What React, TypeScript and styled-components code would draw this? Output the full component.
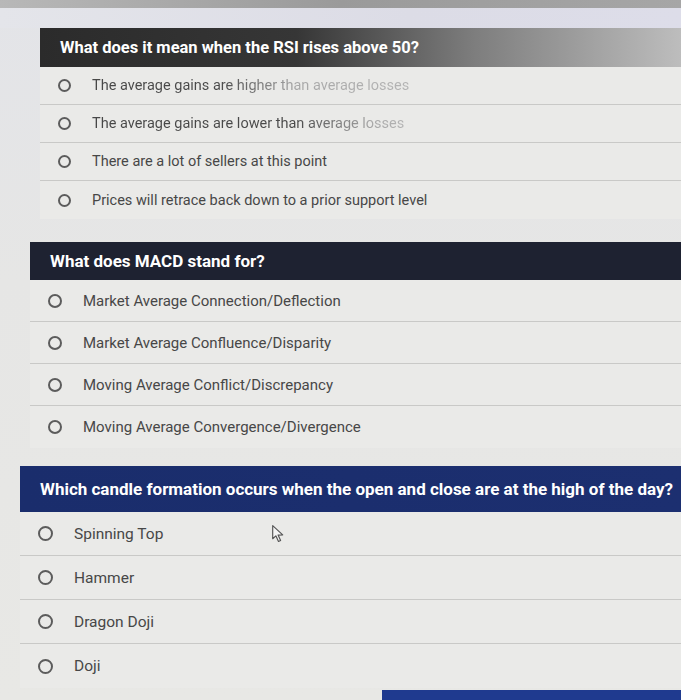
import styled, { createGlobalStyle } from "styled-components";

const GlobalStyle = createGlobalStyle`
  body {
    margin: 0;
    padding: 0;
    background: #e5e5e4;
    font-family: Roboto, "Liberation Sans", sans-serif;
  }
`;

const Page = styled.div`
  width: 681px;
  height: 700px;
  overflow: hidden;
  display: flex;
  flex-direction: column;
  background: linear-gradient(180deg, #e3e4e8 0%, #e6e6e5 40%, #e8e8e5 100%);
`;

const Bezel = styled.div`
  height: 8px;
  background: linear-gradient(90deg, #b8b8b8 0%, #9a9a9a 50%, #a6a6a6 100%);
`;

const Glare = styled.div`
  height: 20px;
  background: linear-gradient(90deg, #e4e5ea 0%, #dcdce6 60%, #dddde9 100%);
`;

const Section = styled.section<{ $indent: number; $gap: number }>`
  display: flex;
  flex-direction: column;
  margin-left: ${(p) => p.$indent}px;
  margin-bottom: ${(p) => p.$gap}px;
`;

const Header = styled.div<{ $bg: string; $height: number; $size: number }>`
  height: ${(p) => p.$height}px;
  display: flex;
  align-items: center;
  padding-left: 20px;
  background: ${(p) => p.$bg};
  color: #ffffff;
  font-weight: 700;
  font-size: ${(p) => p.$size}px;
  white-space: nowrap;
`;

const Options = styled.div`
  display: flex;
  flex-direction: column;
  background: #eaeae8;
`;

const Row = styled.label<{ $height: number; $last?: boolean }>`
  height: ${(p) => p.$height}px;
  display: flex;
  align-items: center;
  border-bottom: ${(p) => (p.$last ? "none" : "1px solid #c9c9c7")};
  box-sizing: border-box;
`;

const Radio = styled.span<{ $size: number }>`
  width: ${(p) => p.$size}px;
  height: ${(p) => p.$size}px;
  border: 2px solid #5c5c5c;
  border-radius: 50%;
  box-sizing: border-box;
  margin-left: 18px;
  margin-right: 21px;
  flex-shrink: 0;
`;

const Label = styled.span<{ $size: number; $fade?: number }>`
  font-size: ${(p) => p.$size}px;
  color: #474747;
  white-space: nowrap;
  ${(p) =>
    p.$fade
      ? `
    background: linear-gradient(90deg, #474747 0%, #4a4a4a ${p.$fade}%, #a8a8a8 ${p.$fade + 25}%, #b4b4b4 100%);
    -webkit-background-clip: text;
    background-clip: text;
    color: transparent;
  `
      : ""}
`;

const Cursor = styled.svg`
  margin-left: 108px;
`;

const NextBar = styled.div`
  margin-top: auto;
  margin-left: 382px;
  height: 10px;
  background: #1f3a8f;
`;

type Option = { text: string; fade?: number; cursor?: boolean };

type Question = {
  title: string;
  indent: number;
  gap: number;
  headerBg: string;
  headerHeight: number;
  titleSize: number;
  rowHeight: number;
  textSize: number;
  radioSize: number;
  options: Option[];
};

const questions: Question[] = [
  {
    title: "What does it mean when the RSI rises above 50?",
    indent: 40,
    gap: 23,
    headerBg:
      "linear-gradient(90deg, #2b2b2b 0%, #363636 40%, #7e7e7e 68%, #bdbdbd 100%)",
    headerHeight: 39,
    titleSize: 16.5,
    rowHeight: 38,
    textSize: 14.5,
    radioSize: 13,
    options: [
      { text: "The average gains are higher than average losses", fade: 40 },
      { text: "The average gains are lower than average losses", fade: 65 },
      { text: "There are a lot of sellers at this point" },
      { text: "Prices will retrace back down to a prior support level" },
    ],
  },
  {
    title: "What does MACD stand for?",
    indent: 30,
    gap: 18,
    headerBg: "#1e2231",
    headerHeight: 38,
    titleSize: 17,
    rowHeight: 42,
    textSize: 15,
    radioSize: 14,
    options: [
      { text: "Market Average Connection/Deflection" },
      { text: "Market Average Confluence/Disparity" },
      { text: "Moving Average Conflict/Discrepancy" },
      { text: "Moving Average Convergence/Divergence" },
    ],
  },
  {
    title:
      "Which candle formation occurs when the open and close are at the high of the day?",
    indent: 20,
    gap: 0,
    headerBg: "linear-gradient(90deg, #1a2d6c 0%, #1c2f70 100%)",
    headerHeight: 46,
    titleSize: 17,
    rowHeight: 44,
    textSize: 15.5,
    radioSize: 15,
    options: [
      { text: "Spinning Top", cursor: true },
      { text: "Hammer" },
      { text: "Dragon Doji" },
      { text: "Doji" },
    ],
  },
];

const App = () => {
  return (
    <>
      <GlobalStyle />
      <Page>
        <Bezel />
        <Glare />
        {questions.map((q) => (
          <Section key={q.title} $indent={q.indent} $gap={q.gap}>
            <Header $bg={q.headerBg} $height={q.headerHeight} $size={q.titleSize}>
              {q.title}
            </Header>
            <Options>
              {q.options.map((o, i) => (
                <Row
                  key={o.text}
                  $height={q.rowHeight}
                  $last={i === q.options.length - 1}
                >
                  <Radio $size={q.radioSize} />
                  <Label $size={q.textSize} $fade={o.fade}>
                    {o.text}
                  </Label>
                  {o.cursor && (
                    <Cursor width="15" height="19" viewBox="0 0 14 18">
                      <path
                        d="M1.5 1.5 L1.5 14 L4.5 11.2 L7 16.5 L9 15.6 L6.6 10.5 L11 10.3 Z"
                        fill="#f4f4f4"
                        stroke="#555"
                        strokeWidth="1.1"
                        strokeLinejoin="round"
                      />
                    </Cursor>
                  )}
                </Row>
              ))}
            </Options>
          </Section>
        ))}
        <NextBar />
      </Page>
    </>
  );
};

export default App;
